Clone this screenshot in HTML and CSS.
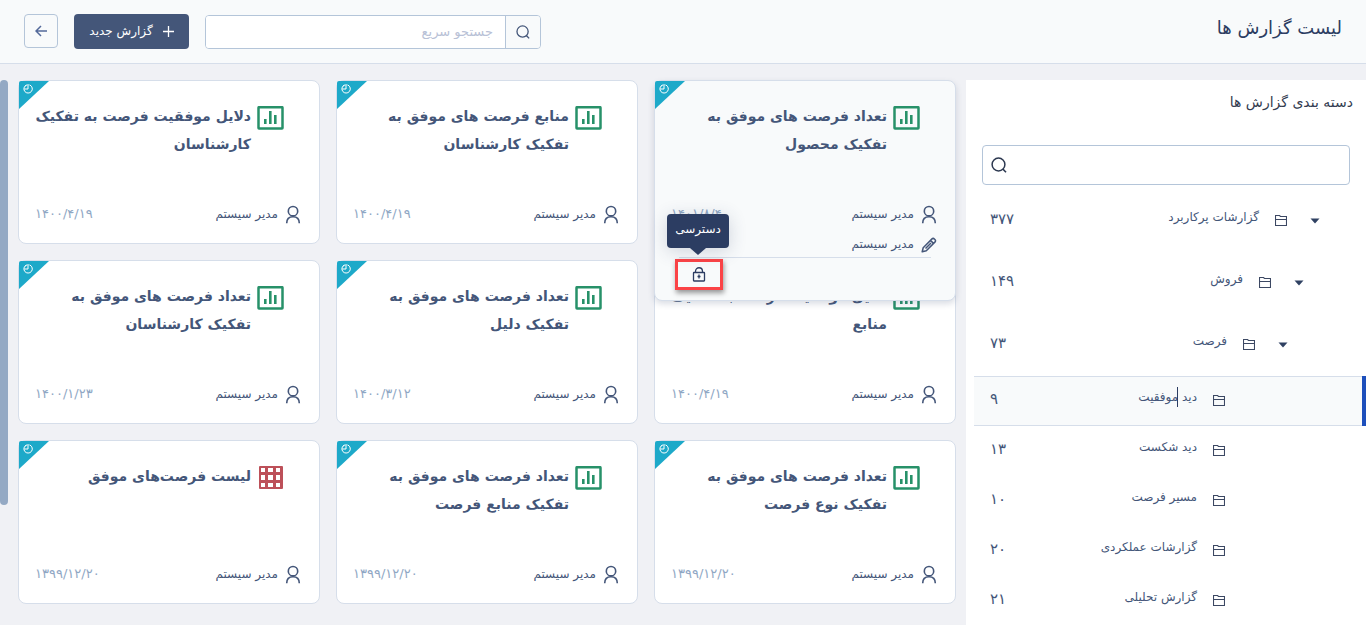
FILE: index.html
```html
<!DOCTYPE html>
<html lang="fa" dir="rtl">
<head>
<meta charset="utf-8">
<meta name="viewport" content="width=device-width, initial-scale=1">
<title>لیست گزارش ها</title>
<link rel="stylesheet" href="styles.css">
</head>
<body>
<svg class="sprite" aria-hidden="true">
  <symbol id="chart" viewBox="0 0 27 24"><rect x="1.500" y="1.200" width="24" height="21.300" rx=".5" fill="none" stroke="currentColor" stroke-width="2.500"/><path d="M7 13h2.600v5H7zM12 5h2.600v13H12zM17 9h2.600v9H17z" fill="currentColor"/></symbol>
  <symbol id="table" viewBox="0 0 27 24"><path fill-rule="evenodd" fill="currentColor" d="M3 0h22a1 1 0 0 1 1 1v21a1 1 0 0 1-1 1H3a1 1 0 0 1-1-1V1a1 1 0 0 1 1-1zM4 2v4h4V2zM11 2v4h5V2zM19 2v4h4V2zM4 9v5h4V9zM11 9v5h5V9zM19 9v5h4V9zM4 17v4h4v-4zM11 17v4h5v-4zM19 17v4h4v-4z"/></symbol>
  <symbol id="user" viewBox="0 0 16 20"><g fill="none" stroke="currentColor" stroke-width="1.600"><circle cx="8" cy="6.200" r="4.700"/><path d="M1.700 18.200c0-4 2.500-6.500 6.300-6.500s6.300 2.500 6.300 6.500"/></g></symbol>
  <symbol id="pencil" viewBox="0 0 16 16"><path d="M1.200 14.800l1-4.100 8.800-8.800c1.500-1.500 4.500 1.400 3.100 3l-8.800 8.800zM9.500 3.400l3.200 3.200M4.500 11.500l5.500-5.500" fill="none" stroke="currentColor" stroke-width="1.500" stroke-linejoin="round"/></symbol>
  <symbol id="clock" viewBox="0 0 10 10"><path d="M7 1.100A4.200 4.200 0 1 1 3.200 1.100M5 .8V5H1.200" fill="none" stroke="currentColor"/><path d="M2 2.500L4 1M7 1.100a4.200 4.200 0 0 0-3.800 0" fill="none" stroke="currentColor" stroke-width=".6"/></symbol>
  <symbol id="folder" viewBox="0 0 12 12"><path d="M.5 10.500V.5h4l1 1h6v9zM.5 4.500h11" fill="none" stroke="currentColor" stroke-width="1.100"/></symbol>
  <symbol id="search" viewBox="0 0 16 16"><path d="M11.800 12l3.200 3.300" stroke="currentColor" stroke-width="1.600"/><circle cx="7.500" cy="7.500" r="6.400" fill="none" stroke="currentColor" stroke-width="1.500"/></symbol>
  <symbol id="caret" viewBox="0 0 10 6"><path d="M.5.500h9L5 5.500z" fill="currentColor"/></symbol>
  <symbol id="lock" viewBox="0 0 14 16"><g fill="none" stroke="currentColor" stroke-width="1.300"><rect x="1.500" y="5.500" width="11" height="8.500" rx=".5"/><path d="M3.500 5.500V4.500c0-5 7-5 7 0v1"/></g><path d="M7 7.500v4M5.500 9.500h3" stroke="currentColor" stroke-width="1.300"/></symbol>
</svg>

<header class="topbar">
  <h1 class="page-title">لیست گزارش ها</h1>
  <div class="tools">
    <form class="quick-search" role="search">
      <button class="quick-search-button" type="button" aria-label="جستجو"><svg class="icon-search"><use href="#search"/></svg></button>
      <input class="quick-search-input" type="text" placeholder="جستجو سریع" aria-label="جستجو سریع">
    </form>
    <button class="new-report" type="button"><svg class="icon-plus" viewBox="0 0 11 11"><path d="M5.500 0v11M0 5.500h11" stroke="currentColor" stroke-width="1.300"/></svg><span class="new-report-label">گزارش جدید</span></button>
    <button class="back" type="button" aria-label="بازگشت"><svg class="icon-back" viewBox="0 0 12 12"><path d="M12 6H1M6 1L1 6l5 5" fill="none" stroke="currentColor" stroke-width="1.500"/></svg></button>
  </div>
</header>

<div class="layout">
  <aside class="sidebar">
    <h2 class="sidebar-title">دسته بندی گزارش ها</h2>
    <div class="sidebar-search"><input class="sidebar-input" type="text" aria-label="جستجو در دسته بندی"><svg class="icon-search dark"><use href="#search"/></svg></div>
    <ul class="tree">
      <li><a class="node level-1" href="#"><svg class="icon-caret"><use href="#caret"/></svg><svg class="icon-folder"><use href="#folder"/></svg><span class="label">گزارشات پرکاربرد</span><span class="count">۳۷۷</span></a></li>
      <li><a class="node level-2" href="#"><svg class="icon-caret"><use href="#caret"/></svg><svg class="icon-folder"><use href="#folder"/></svg><span class="label">فروش</span><span class="count">۱۴۹</span></a></li>
      <li><a class="node level-3" href="#"><svg class="icon-caret"><use href="#caret"/></svg><svg class="icon-folder"><use href="#folder"/></svg><span class="label">فرصت</span><span class="count">۷۳</span></a></li>
      <li><a class="node leaf selected" href="#"><svg class="icon-folder"><use href="#folder"/></svg><span class="label">دید <span class="ibeam"></span>موفقیت</span><span class="count">۹</span></a></li>
      <li><a class="node leaf" href="#"><svg class="icon-folder"><use href="#folder"/></svg><span class="label">دید شکست</span><span class="count">۱۳</span></a></li>
      <li><a class="node leaf" href="#"><svg class="icon-folder"><use href="#folder"/></svg><span class="label">مسیر فرصت</span><span class="count">۱۰</span></a></li>
      <li><a class="node leaf" href="#"><svg class="icon-folder"><use href="#folder"/></svg><span class="label">گزارشات عملکردی</span><span class="count">۲۰</span></a></li>
      <li><a class="node leaf" href="#"><svg class="icon-folder"><use href="#folder"/></svg><span class="label">گزارش تحلیلی</span><span class="count">۲۱</span></a></li>
    </ul>
  </aside>

  <main class="cards">
    <div class="slot">
      <article class="card open">
        <span class="ribbon"><svg class="icon-clock"><use href="#clock"/></svg></span>
        <div class="head"><svg class="icon-type"><use href="#chart"/></svg><h3 class="title">تعداد فرصت های موفق به<br>تفکیک محصول</h3></div>
        <div class="meta"><svg class="icon-user"><use href="#user"/></svg><span class="owner">مدیر سیستم</span><time class="date">۱۴۰۱/۸/۴</time></div>
        <div class="meta editor"><svg class="icon-pencil"><use href="#pencil"/></svg><span class="owner">مدیر سیستم</span></div>
        <div class="actions"><button class="access" type="button" aria-labelledby="access-tip"><svg class="icon-lock"><use href="#lock"/></svg><span class="tooltip" id="access-tip" role="tooltip">دسترسی</span></button></div>
      </article>
    </div>
    <article class="card">
      <span class="ribbon"><svg class="icon-clock"><use href="#clock"/></svg></span>
      <div class="head"><svg class="icon-type"><use href="#chart"/></svg><h3 class="title">منابع فرصت های موفق به<br>تفکیک کارشناسان</h3></div>
      <div class="meta"><svg class="icon-user"><use href="#user"/></svg><span class="owner">مدیر سیستم</span><time class="date">۱۴۰۰/۴/۱۹</time></div>
    </article>
    <article class="card">
      <span class="ribbon"><svg class="icon-clock"><use href="#clock"/></svg></span>
      <div class="head"><svg class="icon-type"><use href="#chart"/></svg><h3 class="title">دلایل موفقیت فرصت به تفکیک<br>کارشناسان</h3></div>
      <div class="meta"><svg class="icon-user"><use href="#user"/></svg><span class="owner">مدیر سیستم</span><time class="date">۱۴۰۰/۴/۱۹</time></div>
    </article>
    <article class="card">
      <span class="ribbon"><svg class="icon-clock"><use href="#clock"/></svg></span>
      <div class="head"><svg class="icon-type"><use href="#chart"/></svg><h3 class="title">دلایل موفقیت فرصت به تفکیک<br>منابع</h3></div>
      <div class="meta"><svg class="icon-user"><use href="#user"/></svg><span class="owner">مدیر سیستم</span><time class="date">۱۴۰۰/۴/۱۹</time></div>
    </article>
    <article class="card">
      <span class="ribbon"><svg class="icon-clock"><use href="#clock"/></svg></span>
      <div class="head"><svg class="icon-type"><use href="#chart"/></svg><h3 class="title">تعداد فرصت های موفق به<br>تفکیک دلیل</h3></div>
      <div class="meta"><svg class="icon-user"><use href="#user"/></svg><span class="owner">مدیر سیستم</span><time class="date">۱۴۰۰/۳/۱۲</time></div>
    </article>
    <article class="card">
      <span class="ribbon"><svg class="icon-clock"><use href="#clock"/></svg></span>
      <div class="head"><svg class="icon-type"><use href="#chart"/></svg><h3 class="title">تعداد فرصت های موفق به<br>تفکیک کارشناسان</h3></div>
      <div class="meta"><svg class="icon-user"><use href="#user"/></svg><span class="owner">مدیر سیستم</span><time class="date">۱۴۰۰/۱/۲۳</time></div>
    </article>
    <article class="card">
      <span class="ribbon"><svg class="icon-clock"><use href="#clock"/></svg></span>
      <div class="head"><svg class="icon-type"><use href="#chart"/></svg><h3 class="title">تعداد فرصت های موفق به<br>تفکیک نوع فرصت</h3></div>
      <div class="meta"><svg class="icon-user"><use href="#user"/></svg><span class="owner">مدیر سیستم</span><time class="date">۱۳۹۹/۱۲/۲۰</time></div>
    </article>
    <article class="card">
      <span class="ribbon"><svg class="icon-clock"><use href="#clock"/></svg></span>
      <div class="head"><svg class="icon-type"><use href="#chart"/></svg><h3 class="title">تعداد فرصت های موفق به<br>تفکیک منابع فرصت</h3></div>
      <div class="meta"><svg class="icon-user"><use href="#user"/></svg><span class="owner">مدیر سیستم</span><time class="date">۱۳۹۹/۱۲/۲۰</time></div>
    </article>
    <article class="card">
      <span class="ribbon"><svg class="icon-clock"><use href="#clock"/></svg></span>
      <div class="head"><svg class="icon-type red"><use href="#table"/></svg><h3 class="title">لیست فرصت‌های موفق</h3></div>
      <div class="meta"><svg class="icon-user"><use href="#user"/></svg><span class="owner">مدیر سیستم</span><time class="date">۱۳۹۹/۱۲/۲۰</time></div>
    </article>
  </main>
  <div class="scrollbar"><div class="thumb"></div></div>
</div>
</body>
</html>
```
FILE: styles.css
```css
* { box-sizing: border-box; }
body {
  margin: 0;
  height: 100vh;
  overflow: hidden;
  display: flex;
  flex-direction: column;
  background: #f0f1f5;
  color: #445679;
  font-family: "DejaVu Sans", sans-serif;
  font-size: 12px;
}
button, input { font: inherit; color: inherit; }
svg { display: block; flex: none; }
.sprite { position: absolute; width: 0; height: 0; }

.topbar {
  height: 64px;
  flex: none;
  display: flex;
  justify-content: space-between;
  padding: 14px 24px 0;
  background: #f8fafb;
  border-bottom: 1px solid #d6deea;
}
.page-title { margin: 0; font-size: 18px; line-height: 28px; font-weight: 400; color: #2c3d62; }
.tools { display: flex; gap: 16px; align-items: flex-start; }
.quick-search {
  display: flex;
  width: 336px;
  height: 34px;
  margin-top: 1px;
  border: 1px solid #b4c5d9;
  border-radius: 4px;
  overflow: hidden;
}
.quick-search-button {
  width: 35px;
  padding: 0;
  border: 0;
  border-left: 1px solid #b4c5d9;
  background: #f8fafb;
  display: grid;
  place-items: center;
}
.quick-search-input { flex: 1; min-width: 0; border: 0; padding: 0 12px 2px; background: #fff; font-size: 13px; }
.quick-search-input::placeholder { color: #b8c1d6; opacity: 1; }
.icon-search { width: 14px; height: 14px; color: #445679; }
.icon-search.dark { width: 16px; height: 16px; color: #2c3850; }
.new-report {
  width: 115px;
  height: 35px;
  padding: 0;
  border: 0;
  border-radius: 4px;
  background: #445679;
  color: #fff;
  display: flex;
  align-items: center;
  justify-content: center;
  gap: 10px;
  white-space: nowrap;
}
.new-report-label { padding-bottom: 2px; }
.icon-plus { width: 11px; height: 11px; }
.back {
  width: 34px;
  height: 34px;
  padding: 0;
  border: 1px solid #b4c5d9;
  border-radius: 4px;
  background: #f8fafb;
  color: #53699a;
  display: grid;
  place-items: center;
}
.icon-back { width: 12px; height: 12px; }

.layout { flex: 1; min-height: 0; display: flex; padding-top: 16px; }
.sidebar { flex: 0 0 400px; background: #fff; }
.sidebar-title { margin: 0; padding: 8px 13px 0; font-size: 14px; line-height: 28px; font-weight: 400; color: #333c50; }
.sidebar-search {
  display: flex;
  align-items: center;
  height: 40px;
  margin: 29px 16px 5px;
  padding-left: 8px;
  border: 1px solid #b4c5d9;
  border-radius: 4px;
}
.sidebar-input { flex: 1; min-width: 0; border: 0; background: none; height: 36px; outline: 0; }
.tree { margin: 0; padding: 0 0 0 8px; list-style: none; }
.node {
  display: flex;
  align-items: center;
  height: 62px;
  padding-left: 16px;
  color: #445679;
  text-decoration: none;
}
.icon-caret { width: 10px; height: 6px; margin-left: 23px; color: #2f4162; }
.icon-folder { width: 12px; height: 12px; margin-left: 16px; color: #3c4863; }
.node .label { padding-bottom: 8px; }
.count { margin-right: auto; font-size: 15px; padding-bottom: 4px; }
.level-1 { padding-right: 46px; }
.level-2 { padding-right: 62px; }
.level-3 { padding-right: 78px; }
.leaf { height: 50px; padding-right: 137px; border-right: 4px solid transparent; }
.selected { background: #f8fafb; border-right-color: #1d4fbc; box-shadow: inset 0 1px #d6deea, inset 0 -1px #d6deea; }
.ibeam { position: relative; }
.ibeam::after { content: ""; position: absolute; right: 0; top: -3px; width: 1px; height: 20px; background: #2c3d62; }

.cards {
  flex: 1;
  min-width: 0;
  display: grid;
  grid-template-columns: repeat(3, minmax(0, 1fr));
  grid-auto-rows: 164px;
  gap: 16px;
  padding: 0 10px;
}
.slot { position: relative; z-index: 1; }
.card {
  position: relative;
  display: flex;
  flex-direction: column;
  padding: 21px 18px 8px 16px;
  border: 1px solid #d6deea;
  border-radius: 8px;
  background: #fff;
}
.open {
  min-height: 221px;
  background: #f8fafb;
  box-shadow: 0 3px 6px rgba(68, 86, 121, .2);
}
.ribbon {
  position: absolute;
  top: 0;
  left: 0;
  width: 30px;
  height: 28px;
  border-top-left-radius: 2px;
  background: #1da9c9;
  color: #fff;
  clip-path: polygon(0 0, 100% 0, 0 100%);
  padding: 3px 4px;
  direction: ltr;
}
.icon-clock { width: 10px; height: 10px; }
.head { display: flex; align-items: flex-start; gap: 6px; height: 103px; padding-right: 17px; flex: none; }
.icon-type { width: 27px; height: 24px; margin-top: 4px; color: #279169; }
.icon-type.red { color: #bd5059; }
.title { margin: 0; font-size: 14px; line-height: 28px; font-weight: 700; white-space: nowrap; }
.meta { display: flex; align-items: center; gap: 7px; height: 20px; }
.owner { padding-bottom: 2px; }
.icon-user { width: 16px; height: 20px; }
.icon-pencil { width: 16px; height: 16px; }
.date { margin-right: auto; padding-bottom: 4px; font-size: 13px; color: #8fa7c4; }
.editor { margin-top: 10px; }
.actions {
  display: flex;
  justify-content: flex-end;
  margin: 2px 6px 0 8px;
  border-top: 1px solid #d6deea;
  padding-top: 1px;
}
.access {
  position: relative;
  width: 48px;
  height: 31px;
  margin-left: -4px;
  padding: 0;
  border: 3px solid #fb4346;
  background: #f8fafb;
  color: #2c3d62;
  box-shadow: 1px 3px 5px rgba(0, 0, 0, .4);
  display: grid;
  place-items: center;
}
.icon-lock { width: 14px; height: 16px; }
.tooltip {
  position: absolute;
  bottom: calc(100% + 14px);
  left: -11px;
  width: 62px;
  height: 34px;
  border-radius: 4px;
  background: #2c3d62;
  color: #fff;
  line-height: 30px;
  text-align: center;
  box-shadow: 0 3px 18px rgba(44, 61, 98, .2);
}
.tooltip::after {
  content: "";
  position: absolute;
  top: 100%;
  left: 23px;
  border: 8px solid transparent;
  border-top: 7px solid #2c3d62;
  border-bottom: 0;
}
.scrollbar { flex: 0 0 8px; }
.thumb { height: 78%; border-radius: 4px; background: #94a9c4; }
```
